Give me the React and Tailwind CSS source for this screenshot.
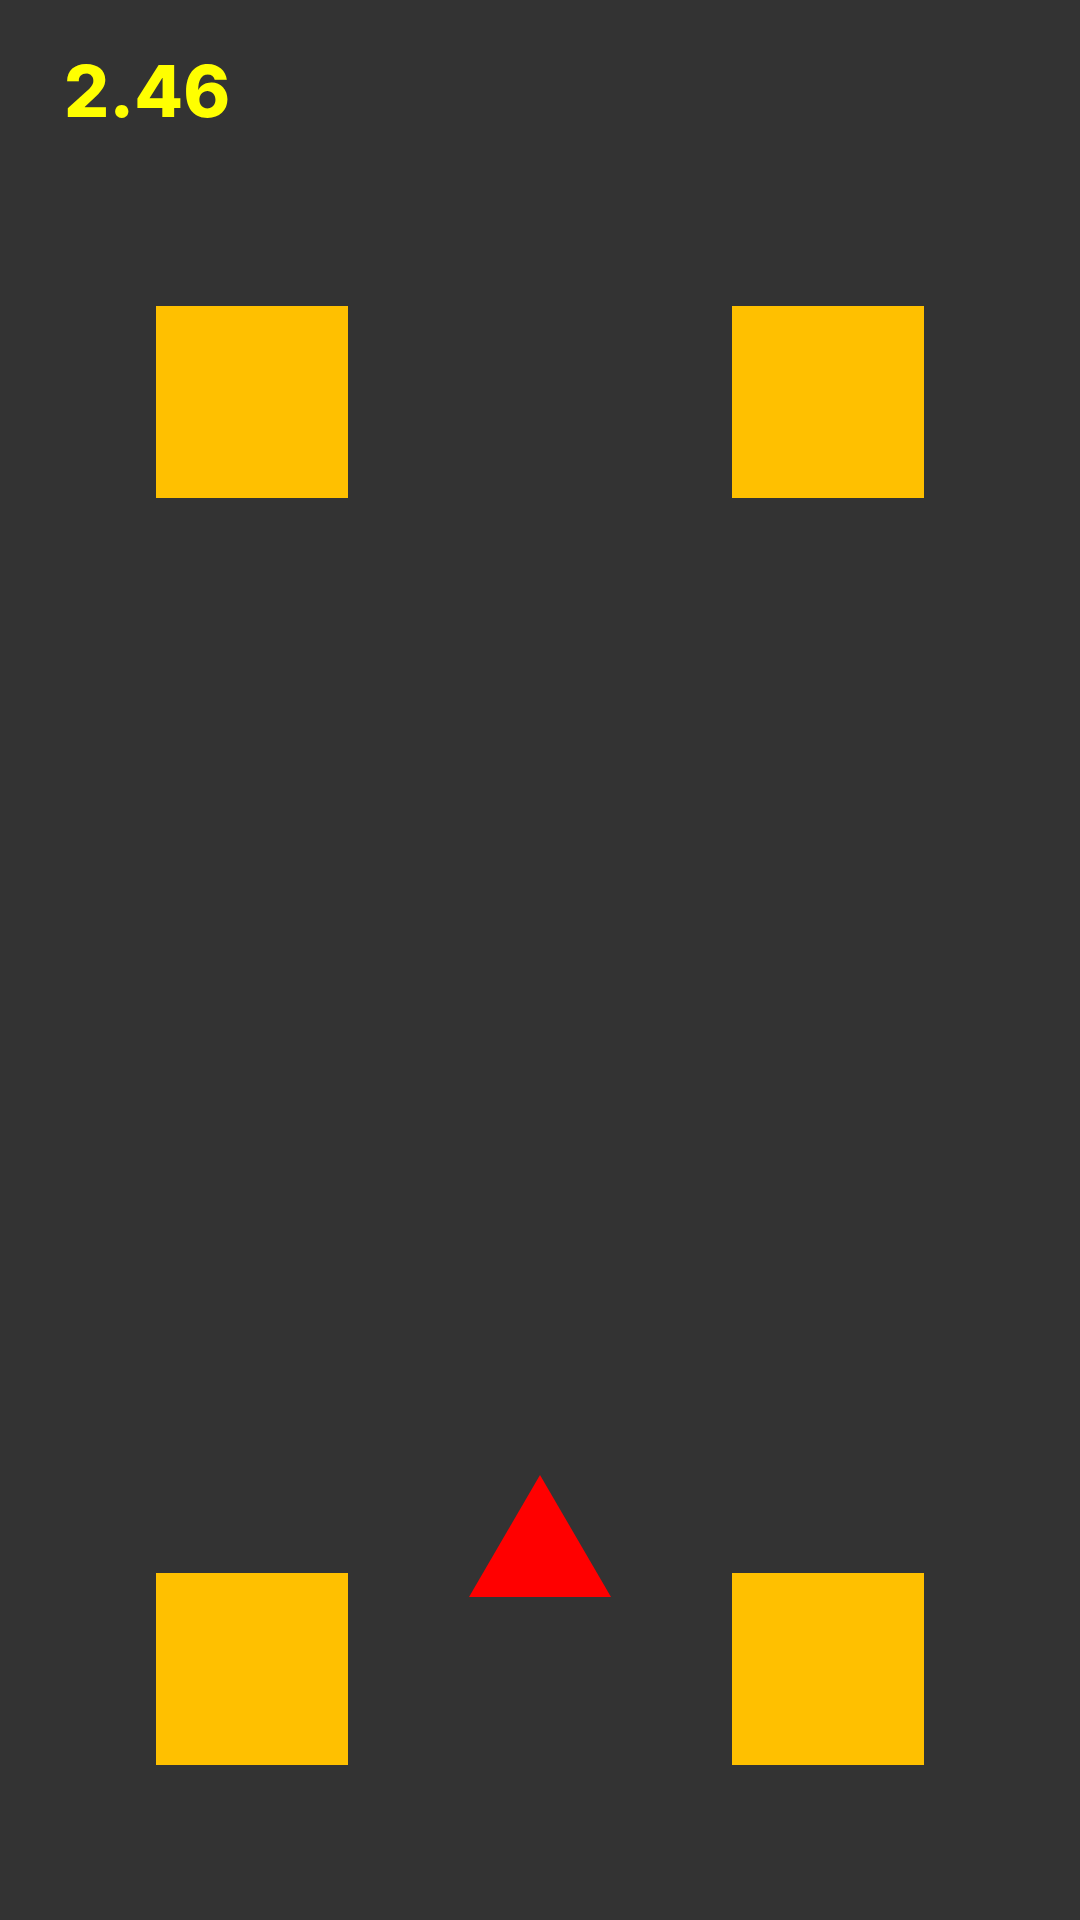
export default function App() {
  return (
    <div className="relative w-[1080px] h-[1920px] overflow-hidden bg-[#333333] font-['Inter',sans-serif]">
      {/* Score */}
      <div className="h-[130px] pl-[64px] pt-[56px] text-[71px] font-extrabold leading-none text-[#ffff00]">
        2.46
      </div>

      {/* Top blocks */}
      <div className="mt-[176px] flex justify-between px-[156px]">
        <div className="w-[192px] h-[192px] bg-[#ffc000]" />
        <div className="w-[192px] h-[192px] bg-[#ffc000]" />
      </div>

      {/* Bottom blocks */}
      <div className="mt-[1075px] flex justify-between px-[156px]">
        <div className="w-[192px] h-[192px] bg-[#ffc000]" />
        <div className="w-[192px] h-[192px] bg-[#ffc000]" />
      </div>

      {/* Player */}
      <svg
        className="absolute left-[469px] top-[1475px]"
        width="142"
        height="122"
        viewBox="0 0 142 122"
      >
        <polygon points="71,0 142,122 0,122" fill="#ff0000" />
      </svg>
    </div>
  );
}
